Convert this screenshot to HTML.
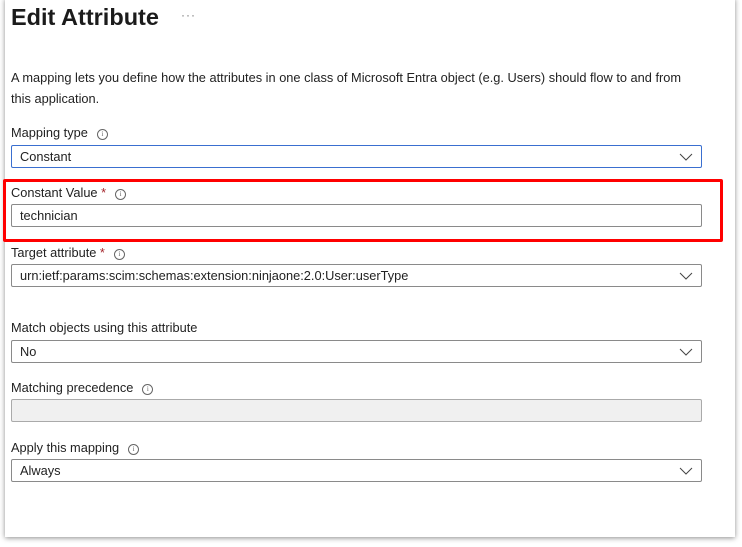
<!DOCTYPE html>
<html><head><style>
body{margin:0;width:742px;height:547px;background:#fff;font-family:"Liberation Sans",sans-serif;color:#222;position:relative;overflow:hidden}
.card{position:absolute;left:5px;top:-2px;width:730px;height:539px;background:#fff;box-shadow:0 1px 5px rgba(0,0,0,.45)}
.a{position:absolute;white-space:nowrap}
.t{font-size:12.8px;color:#222}
.box{position:absolute;left:11px;width:689px;height:21px;border:1px solid #8a8a8a;border-radius:2px;background:#fff;font-size:12.8px;line-height:22px;box-sizing:content-box}
.box span{position:absolute;left:8px}
.chev{position:absolute;right:8px;top:6px}
.info{display:inline-block;width:9px;height:9px;border:1px solid #666;border-radius:50%;font-size:7px;line-height:9px;text-align:center;color:#666;margin-left:9px;vertical-align:1px;font-family:"Liberation Serif",serif}
.st{color:#a4262c}
</style></head><body>
<div class="card"></div>
<div class="a" style="left:11px;top:4px;font-size:23.5px;font-weight:bold;color:#1b1b1b">Edit Attribute</div>
<div class="a" style="left:181px;top:8px;font-size:12px;color:#777;letter-spacing:1px">···</div>
<div class="a t" style="left:11px;top:70px">A mapping lets you define how the attributes in one class of Microsoft Entra object (e.g. Users) should flow to and from</div>
<div class="a t" style="left:11px;top:91px">this application.</div>

<div class="a t" style="left:11px;top:125px">Mapping type<span class="info">i</span></div>
<div class="box" style="top:145px;border-color:#3a6fd0;"><span>Constant</span><svg class="chev" width="14" height="10"><path d="M1 2 L7 8 L13 2" fill="none" stroke="#444" stroke-width="1"/></svg></div>

<div class="a" style="left:3px;top:179px;width:714px;height:57px;border:3px solid #f00;border-radius:2px"></div>
<div class="a t" style="left:11px;top:185px">Constant Value <span class="st">*</span><span class="info">i</span></div>
<div class="box" style="top:204px;"><span>technician</span></div>

<div class="a t" style="left:11px;top:245px">Target attribute <span class="st">*</span><span class="info">i</span></div>
<div class="box" style="top:264px;"><span>urn:ietf:params:scim:schemas:extension:ninjaone:2.0:User:userType</span><svg class="chev" width="14" height="10"><path d="M1 2 L7 8 L13 2" fill="none" stroke="#444" stroke-width="1"/></svg></div>

<div class="a t" style="left:11px;top:320px">Match objects using this attribute</div>
<div class="box" style="top:340px;"><span>No</span><svg class="chev" width="14" height="10"><path d="M1 2 L7 8 L13 2" fill="none" stroke="#444" stroke-width="1"/></svg></div>

<div class="a t" style="left:11px;top:380px">Matching precedence<span class="info">i</span></div>
<div class="box" style="top:399px;background:#f0f0f0;border-color:#aaa"></div>

<div class="a t" style="left:11px;top:440px">Apply this mapping<span class="info">i</span></div>
<div class="box" style="top:459px;"><span>Always</span><svg class="chev" width="14" height="10"><path d="M1 2 L7 8 L13 2" fill="none" stroke="#444" stroke-width="1"/></svg></div>
</body></html>
